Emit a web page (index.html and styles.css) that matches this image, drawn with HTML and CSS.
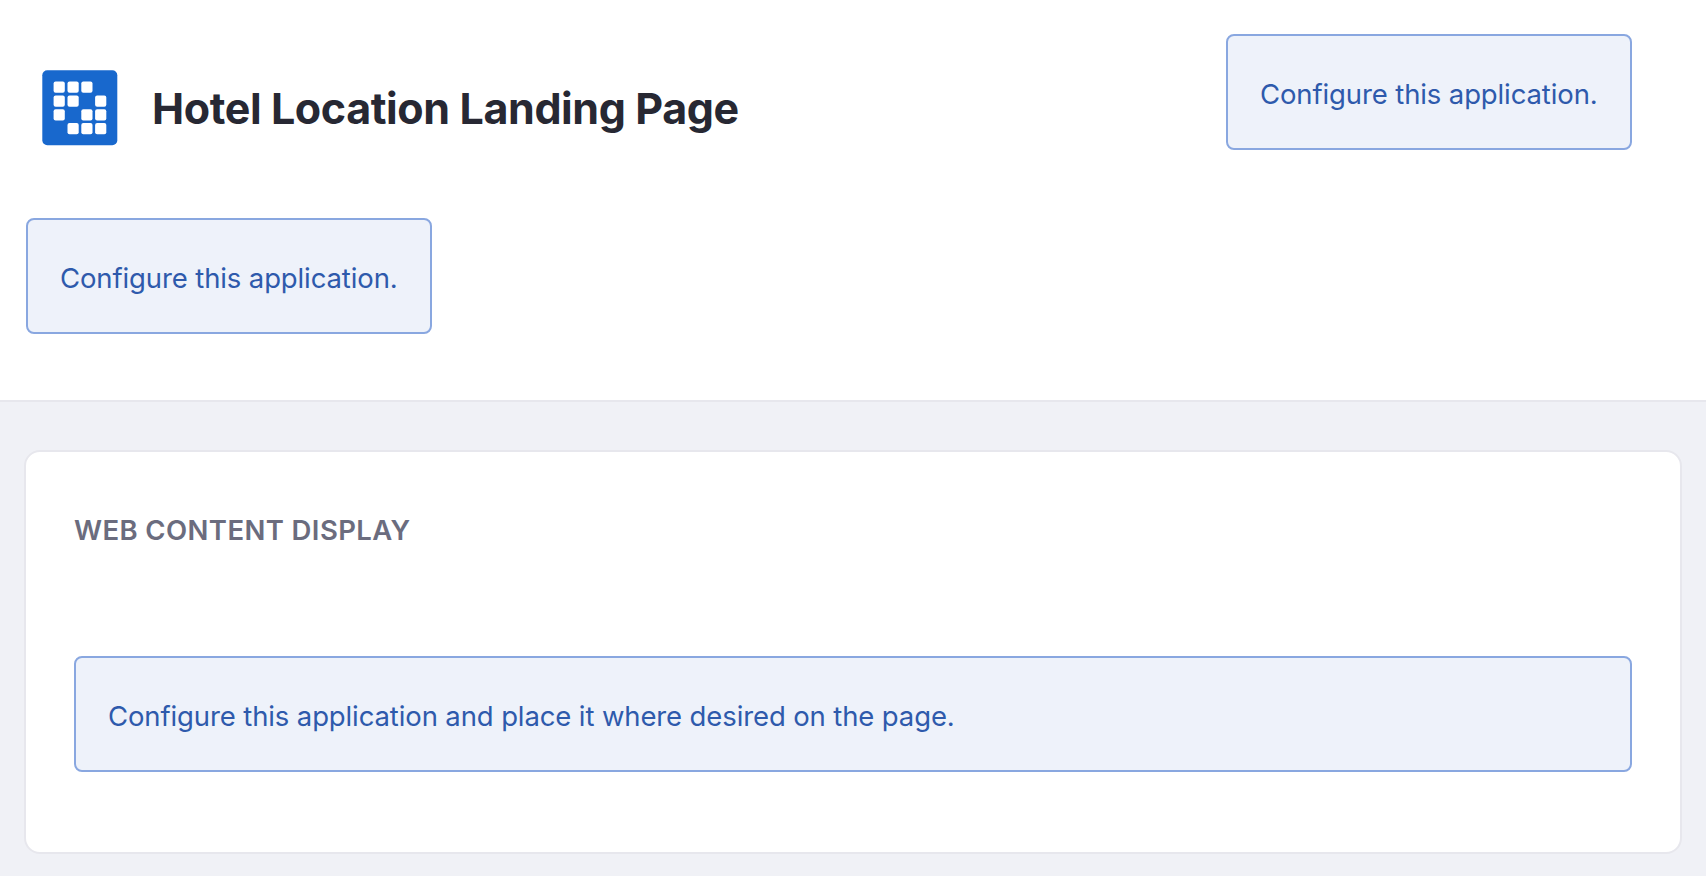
FILE: index.html
```html
<!DOCTYPE html>
<html lang="en">
<head>
<meta charset="utf-8">
<title>Hotel Location Landing Page</title>
<link rel="stylesheet" href="styles.css">
</head>
<body>
<header class="header">
  <div class="header-row">
    <div class="brand">
      <svg class="logo" viewBox="0 0 76 76" aria-hidden="true">
        <rect x=".3" y=".3" width="75" height="75" rx="5" fill="#1868cd"/>
        <g fill="#fff">
          <rect x="11.6" y="11.6" width="11.2" height="11.2" rx="2"/>
          <rect x="25.5" y="11.6" width="11.2" height="11.2" rx="2"/>
          <rect x="39.3" y="11.6" width="11.2" height="11.2" rx="2"/>
          <rect x="11.6" y="25.5" width="11.2" height="11.2" rx="2"/>
          <rect x="25.5" y="25.5" width="11.2" height="11.2" rx="2"/>
          <rect x="53.1" y="25.5" width="11.2" height="11.2" rx="2"/>
          <rect x="11.6" y="39.3" width="11.2" height="11.2" rx="2"/>
          <rect x="39.3" y="39.3" width="11.2" height="11.2" rx="2"/>
          <rect x="53.1" y="39.3" width="11.2" height="11.2" rx="2"/>
          <rect x="25.5" y="53.1" width="11.2" height="11.2" rx="2"/>
          <rect x="39.3" y="53.1" width="11.2" height="11.2" rx="2"/>
          <rect x="53.1" y="53.1" width="11.2" height="11.2" rx="2"/>
        </g>
      </svg>
      <h1 class="title">Hotel Location Landing Page</h1>
    </div>
    <div class="alert alert-small">Configure this application.</div>
  </div>
  <div class="alert alert-small">Configure this application.</div>
</header>
<main class="main">
  <section class="card">
    <h2 class="card-title">Web Content Display</h2>
    <div class="alert">Configure this application and place it where desired on the page.</div>
  </section>
</main>
</body>
</html>
```
FILE: styles.css
```css
* {
  box-sizing: border-box;
}

body {
  margin: 0;
  background: #f0f1f6;
  font-family: Inter, "Liberation Sans", sans-serif;
  font-size: 28px;
}

.header {
  height: 402px;
  padding: 34px 74px 0 26px;
  background: #fff;
  border-bottom: 2px solid #e7e7ed;
}

.header-row {
  display: flex;
  justify-content: space-between;
  align-items: flex-start;
  height: 184px;
}

.brand {
  display: flex;
  align-items: center;
  gap: 34px;
  padding: 36px 0 0 16px;
}

.logo {
  width: 76px;
  height: 76px;
}

.title {
  margin: 0;
  color: #272833;
  font-size: 43px;
  font-weight: 700;
  line-height: 64px;
  letter-spacing: -0.39px;
  white-space: nowrap;
}

.alert {
  height: 116px;
  padding: 31px 32px;
  border: 2px solid #89a7e0;
  border-radius: 8px;
  background: #eef2fa;
  color: #2e5aac;
  font-size: 27.5px;
  line-height: 54px;
  letter-spacing: -0.12px;
  white-space: nowrap;
}

.alert-small {
  width: 406px;
}

.main {
  padding: 48px 24px 22px;
}

.card {
  height: 404px;
  padding: 54px 48px 0;
  background: #fff;
  border: 2px solid #e7e7ed;
  border-radius: 16px;
}

.card-title {
  margin: 0 0 102px;
  color: #6b6c7e;
  font-size: 27.5px;
  font-weight: 600;
  line-height: 48px;
  letter-spacing: 0.4px;
  text-transform: uppercase;
}
```
